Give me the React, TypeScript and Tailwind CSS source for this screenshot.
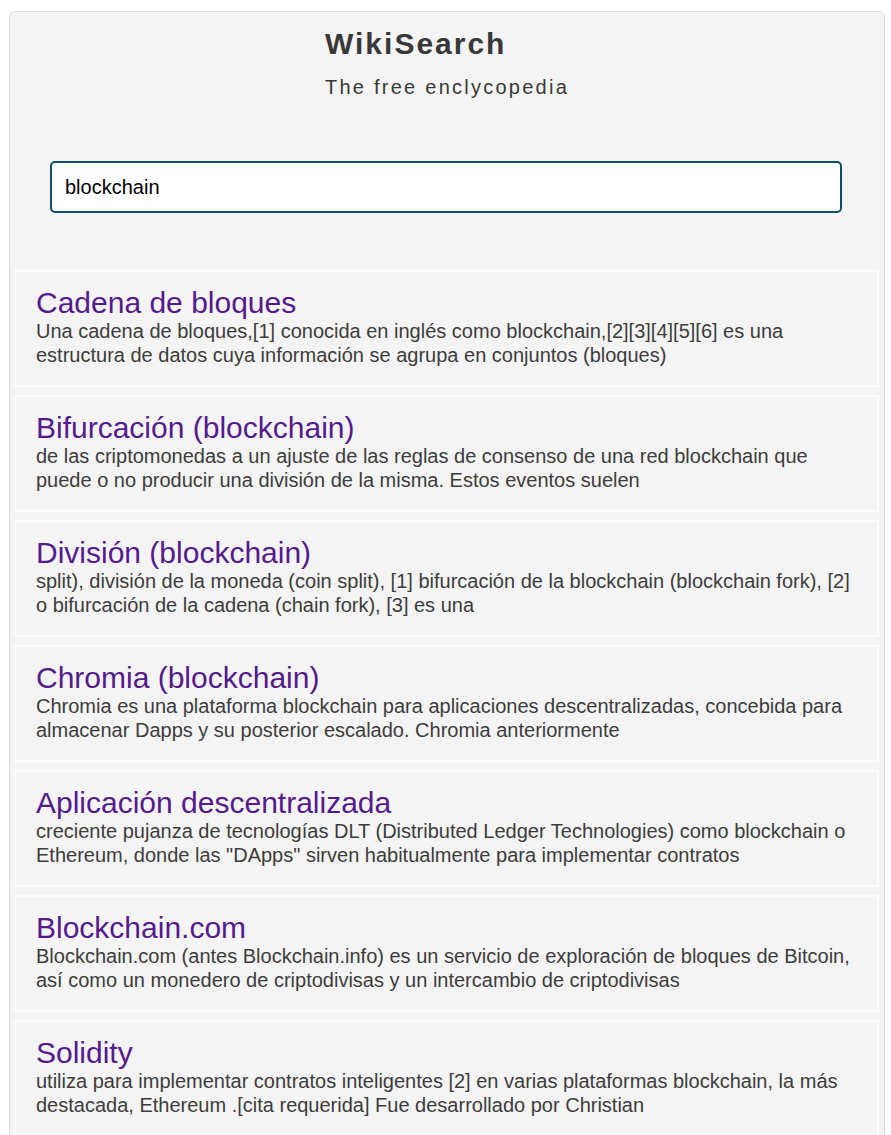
import React from 'react';

const results = [
  {
    title: 'Cadena de bloques',
    snippet:
      'Una cadena de bloques,[1] conocida en inglés como blockchain,[2][3][4][5][6] es una estructura de datos cuya información se agrupa en conjuntos (bloques)',
  },
  {
    title: 'Bifurcación (blockchain)',
    snippet:
      'de las criptomonedas a un ajuste de las reglas de consenso de una red blockchain que puede o no producir una división de la misma. Estos eventos suelen',
  },
  {
    title: 'División (blockchain)',
    snippet:
      'split), división de la moneda (coin split), [1] bifurcación de la blockchain (blockchain fork), [2] o bifurcación de la cadena (chain fork), [3] es una',
  },
  {
    title: 'Chromia (blockchain)',
    snippet:
      'Chromia es una plataforma blockchain para aplicaciones descentralizadas, concebida para almacenar Dapps y su posterior escalado. Chromia anteriormente',
  },
  {
    title: 'Aplicación descentralizada',
    snippet:
      'creciente pujanza de tecnologías DLT (Distributed Ledger Technologies) como blockchain o Ethereum, donde las "DApps" sirven habitualmente para implementar contratos',
  },
  {
    title: 'Blockchain.com',
    snippet:
      'Blockchain.com (antes Blockchain.info) es un servicio de exploración de bloques de Bitcoin, así como un monedero de criptodivisas y un intercambio de criptodivisas',
  },
  {
    title: 'Solidity',
    snippet:
      'utiliza para implementar contratos inteligentes [2] en varias plataformas blockchain, la más destacada, Ethereum .[cita requerida] Fue desarrollado por Christian',
  },
];

const App = () => {
  return (
    <div className="min-h-screen bg-white pt-[11px] font-[family-name:Liberation_Sans,Arial,sans-serif]">
      <div className="ml-[9px] w-[876px] rounded-t-md border border-[#dcdcdc] bg-[#f4f4f4] pb-10">
        <div className="flex flex-col items-center pt-[15px]">
          <div className="text-left">
            <h1 className="text-[30px] font-bold leading-[34px] tracking-[2px] text-[#383838]">WikiSearch</h1>
            <p className="mt-[15px] text-[20px] leading-[23px] tracking-[2.25px] text-[#383838]">The free enclycopedia</p>
          </div>
        </div>

        <div className="mt-[62px] px-[40px]">
          <input
            type="text"
            defaultValue="blockchain"
            className="h-[52px] w-[792px] rounded-[5px] border-2 border-[#0e4c6b] bg-white px-[13px] text-[20px] text-black outline-none"
          />
        </div>

        <div className="mt-[57px] flex flex-col gap-[8px] pl-[4px] pr-[5px]">
          {results.map((r, i) => (
            <div key={i} className="border-2 border-[#fbfbfb] bg-[#f4f4f4] px-[20px] pt-[14px] pb-[18px]">
              <a href="#" className="block text-[30px] leading-[34px] text-[#551a8b]">
                {r.title}
              </a>
              <p className="-mt-[1px] text-[20px] leading-[24px] text-[#3c3c3c]">{r.snippet}</p>
            </div>
          ))}
        </div>
      </div>
    </div>
  );
};

export default App;
